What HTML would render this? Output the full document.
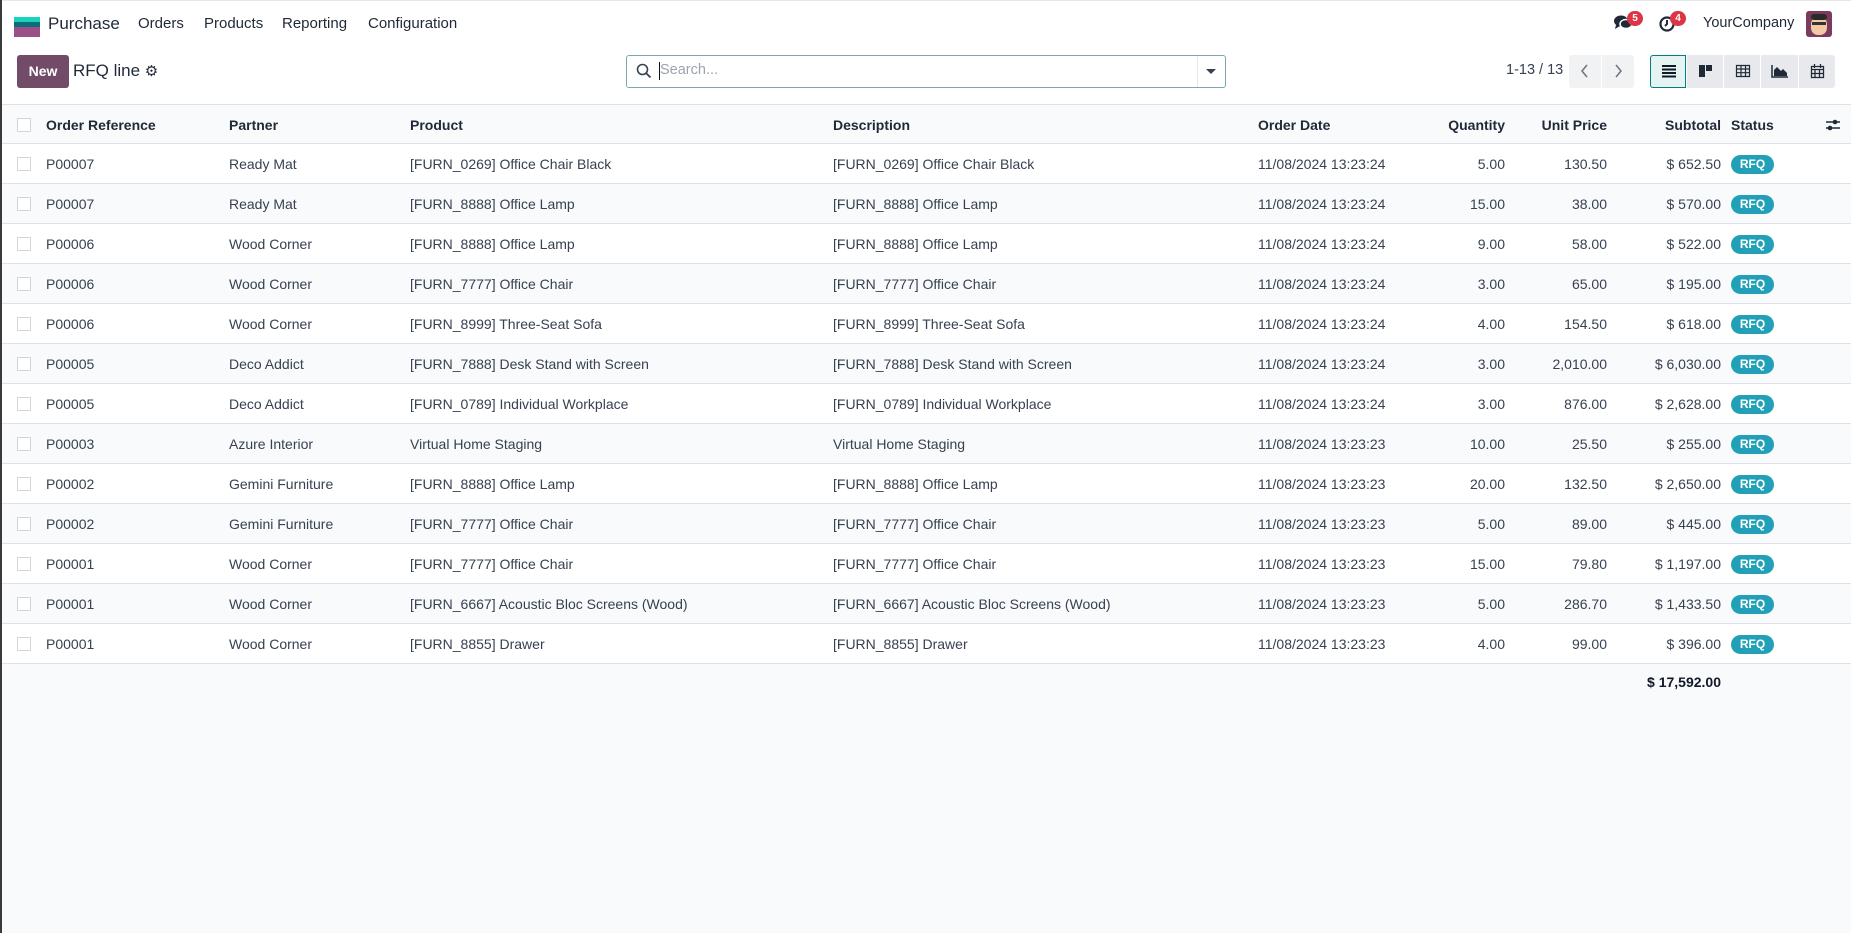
<!DOCTYPE html>
<html><head><meta charset="utf-8"><style>
*{box-sizing:border-box;margin:0;padding:0}
body{width:1851px;height:933px;overflow:hidden;background:#f9fafb;font-family:"Liberation Sans",sans-serif;color:#374151;font-size:14px;position:relative}
.a{position:absolute;white-space:nowrap}
.top{position:absolute;left:0;top:0;width:1851px;height:104px;background:#fff}
.nav{font-size:15px;color:#1f2937;top:15px}
.row{position:absolute;left:0;width:1851px;height:40px;border-bottom:1px solid #dee2e6}
.row .a{top:12px}
.cb{position:absolute;left:17px;top:13px;width:14px;height:14px;border:1px solid #d1d5db;background:#fff;border-radius:1px}
.r{text-align:right}
.badge{position:absolute;left:1731px;top:11px;width:43px;height:19px;background:#21a0b7;color:#fff;border-radius:10px;font-size:12px;font-weight:bold;text-align:center;line-height:19px}
.hd{font-weight:bold;color:#1f2937}
.vb{position:absolute;top:55px;height:33px;width:36px;background:#e7e9ed}
</style></head><body>
<div class="top"></div>
<div style="position:absolute;left:0;top:0;width:1851px;height:1px;background:#e5e7eb"></div>
<!-- logo -->
<div class="a" style="left:14px;top:17px;width:26px;height:5px;background:#1ad3bb"></div>
<div class="a" style="left:14px;top:22px;width:26px;height:5px;background:#0e6b78"></div>
<div class="a" style="left:14px;top:27px;width:26px;height:10px;background:#9b4f86"></div>
<div class="a" style="left:48px;top:14px;font-size:17px;color:#1f2937">Purchase</div>
<div class="a nav" style="left:138px">Orders</div>
<div class="a nav" style="left:204px">Products</div>
<div class="a nav" style="left:282px">Reporting</div>
<div class="a nav" style="left:368px">Configuration</div>
<!-- right icons -->
<svg class="a" style="left:1613px;top:14px" width="20" height="18" viewBox="0 0 20 18"><ellipse cx="8" cy="7" rx="7" ry="5.5" fill="#1f2937"/><path d="M3 11 L2 15 L7 12Z" fill="#1f2937"/><ellipse cx="13" cy="10" rx="6" ry="4.5" fill="#1f2937" stroke="#fff" stroke-width="1.5"/></svg>
<div class="a" style="left:1627px;top:11px;width:16px;height:15px;border-radius:8px;background:#dc3545;color:#fff;font-size:10px;font-weight:bold;text-align:center;line-height:15px">5</div>
<svg class="a" style="left:1658px;top:15px" width="18" height="18" viewBox="0 0 18 18"><circle cx="9" cy="9" r="6.5" fill="none" stroke="#1f2937" stroke-width="2.2"/><path d="M9 5v4l-2 2" stroke="#1f2937" stroke-width="2" fill="none"/></svg>
<div class="a" style="left:1670px;top:11px;width:16px;height:15px;border-radius:8px;background:#dc3545;color:#fff;font-size:10px;font-weight:bold;text-align:center;line-height:15px">4</div>
<div class="a" style="left:1703px;top:15px;font-size:14.5px;color:#1f2937">YourCompany</div>
<div class="a" style="left:1806px;top:11px;width:26px;height:26px;border-radius:3px;background:#7a3b5e;overflow:hidden"><div style="position:absolute;left:5px;top:6px;width:16px;height:18px;border-radius:7px;background:#f3c8a4"></div><div style="position:absolute;left:5px;top:3px;width:16px;height:6px;background:#2b2b2b;border-radius:3px"></div><div style="position:absolute;left:6px;top:11px;width:14px;height:3px;background:#333"></div></div>
<!-- control panel -->
<div class="a" style="left:17px;top:55px;width:52px;height:33px;background:#714b67;border-radius:3px;color:#fff;font-weight:bold;font-size:14px;text-align:center;line-height:33px">New</div>
<div class="a" style="left:73px;top:61px;font-size:17px;color:#1f2937">RFQ line <span style="font-size:15px">⚙</span></div>
<div class="a" style="left:626px;top:55px;width:600px;height:33px;border:1px solid #7aa9ad;border-radius:3px;background:#fff"></div>
<svg class="a" style="left:636px;top:63px" width="16" height="16" viewBox="0 0 16 16"><circle cx="6.5" cy="6.5" r="5" fill="none" stroke="#374151" stroke-width="1.6"/><path d="M10 10l4.5 4.5" stroke="#374151" stroke-width="1.8"/></svg>
<div class="a" style="left:659px;top:62px;width:1px;height:18px;background:#111"></div>
<div class="a" style="left:660px;top:62px;color:#9ca3af;font-size:14.5px">Search...</div>
<div class="a" style="left:1197px;top:56px;width:1px;height:31px;background:#e5e7eb"></div>
<div class="a" style="left:1206px;top:69px;width:0;height:0;border-left:5px solid transparent;border-right:5px solid transparent;border-top:5px solid #374151"></div>
<div class="a" style="left:1506px;top:62px;font-size:14.5px;color:#374151">1-13 / 13</div>
<div class="a" style="left:1569px;top:55px;width:65px;height:33px;background:#f1f2f4;border-radius:3px"></div>
<div class="a" style="left:1601px;top:55px;width:1px;height:33px;background:#fff"></div>
<svg class="a" style="left:1579px;top:63px" width="12" height="16"><path d="M8 2L3 8l5 6" stroke="#6b7280" stroke-width="1.5" fill="none"/></svg>
<svg class="a" style="left:1612px;top:63px" width="12" height="16"><path d="M4 2l5 6-5 6" stroke="#6b7280" stroke-width="1.5" fill="none"/></svg>
<div class="vb" style="left:1650px;background:#e6f3f3;border:1px solid #017e84;border-radius:3px 0 0 3px"></div>
<div class="vb" style="left:1687px"></div><div class="vb" style="left:1724px"></div><div class="vb" style="left:1761px;width:37px"></div><div class="vb" style="left:1799px;border-radius:0 3px 3px 0"></div>
<svg class="a" style="left:1661px;top:64px" width="16" height="14"><path d="M1 2h14M1 5.5h14M1 9h14M1 12.5h14" stroke="#111827" stroke-width="2"/></svg>
<svg class="a" style="left:1698px;top:64px" width="16" height="14"><rect x="1" y="1" width="6" height="12" fill="#1f2937"/><rect x="8" y="1" width="6" height="6" fill="#1f2937"/></svg>
<svg class="a" style="left:1735px;top:64px" width="16" height="14"><path d="M1.5 1.5h13v11h-13zM1.5 5h13M1.5 8.7h13M6 1.5v11M10.5 1.5v11" stroke="#1f2937" stroke-width="1.2" fill="none"/></svg>
<svg class="a" style="left:1771px;top:64px" width="18" height="14"><path d="M1 1v12h16" stroke="#1f2937" stroke-width="1.5" fill="none"/><path d="M3 12V6l3-3 4 4 2-2 4 4v3z" fill="#1f2937"/></svg>
<svg class="a" style="left:1810px;top:63px" width="15" height="16"><path d="M1.5 3.5h12v11h-12zM1.5 6.5h12M5 6.5v8M9.5 6.5v8M1.5 10.5h12M4.5 1v4M10.5 1v4" stroke="#1f2937" stroke-width="1.3" fill="none"/></svg>
<!-- table -->
<div class="row" style="top:104px;height:40px;background:#f9fafb;border-top:1px solid #dee2e6">
<div class="cb"></div>
<div class="a hd" style="left:46px">Order Reference</div>
<div class="a hd" style="left:229px">Partner</div>
<div class="a hd" style="left:410px">Product</div>
<div class="a hd" style="left:833px">Description</div>
<div class="a hd" style="left:1258px">Order Date</div>
<div class="a hd r" style="right:346px">Quantity</div>
<div class="a hd r" style="right:244px">Unit Price</div>
<div class="a hd r" style="right:130px">Subtotal</div>
<div class="a hd" style="left:1731px">Status</div>
<svg class="a" style="left:1825px;top:13px" width="16" height="14"><path d="M1 4h14M1 10h14" stroke="#1f2937" stroke-width="1.6"/><circle cx="10" cy="4" r="2.3" fill="#1f2937"/><circle cx="5" cy="10" r="2.3" fill="#1f2937"/></svg>
</div>
<div id="rows"></div>
<div class="a" style="right:130px;top:674px;font-weight:bold;color:#111827">$ 17,592.00</div>
<div style="position:absolute;left:0;top:0;width:2px;height:933px;background:#3a3a3a"></div>
<script>
var d=[["P00007","Ready Mat","[FURN_0269] Office Chair Black","11/08/2024 13:23:24","5.00","130.50","$ 652.50"],
["P00007","Ready Mat","[FURN_8888] Office Lamp","11/08/2024 13:23:24","15.00","38.00","$ 570.00"],
["P00006","Wood Corner","[FURN_8888] Office Lamp","11/08/2024 13:23:24","9.00","58.00","$ 522.00"],
["P00006","Wood Corner","[FURN_7777] Office Chair","11/08/2024 13:23:24","3.00","65.00","$ 195.00"],
["P00006","Wood Corner","[FURN_8999] Three-Seat Sofa","11/08/2024 13:23:24","4.00","154.50","$ 618.00"],
["P00005","Deco Addict","[FURN_7888] Desk Stand with Screen","11/08/2024 13:23:24","3.00","2,010.00","$ 6,030.00"],
["P00005","Deco Addict","[FURN_0789] Individual Workplace","11/08/2024 13:23:24","3.00","876.00","$ 2,628.00"],
["P00003","Azure Interior","Virtual Home Staging","11/08/2024 13:23:23","10.00","25.50","$ 255.00"],
["P00002","Gemini Furniture","[FURN_8888] Office Lamp","11/08/2024 13:23:23","20.00","132.50","$ 2,650.00"],
["P00002","Gemini Furniture","[FURN_7777] Office Chair","11/08/2024 13:23:23","5.00","89.00","$ 445.00"],
["P00001","Wood Corner","[FURN_7777] Office Chair","11/08/2024 13:23:23","15.00","79.80","$ 1,197.00"],
["P00001","Wood Corner","[FURN_6667] Acoustic Bloc Screens (Wood)","11/08/2024 13:23:23","5.00","286.70","$ 1,433.50"],
["P00001","Wood Corner","[FURN_8855] Drawer","11/08/2024 13:23:23","4.00","99.00","$ 396.00"]];
var h="";d.forEach(function(r,i){h+='<div class="row" style="top:'+(144+i*40)+'px;background:'+(i%2?'#f9fafb':'#fff')+'"><div class="cb"></div><div class="a" style="left:46px">'+r[0]+'</div><div class="a" style="left:229px">'+r[1]+'</div><div class="a" style="left:410px">'+r[2]+'</div><div class="a" style="left:833px">'+r[2]+'</div><div class="a" style="left:1258px">'+r[3]+'</div><div class="a r" style="right:346px">'+r[4]+'</div><div class="a r" style="right:244px">'+r[5]+'</div><div class="a r" style="right:130px">'+r[6]+'</div><div class="badge">RFQ</div></div>';});
document.getElementById("rows").innerHTML=h;
</script>
</body></html>
